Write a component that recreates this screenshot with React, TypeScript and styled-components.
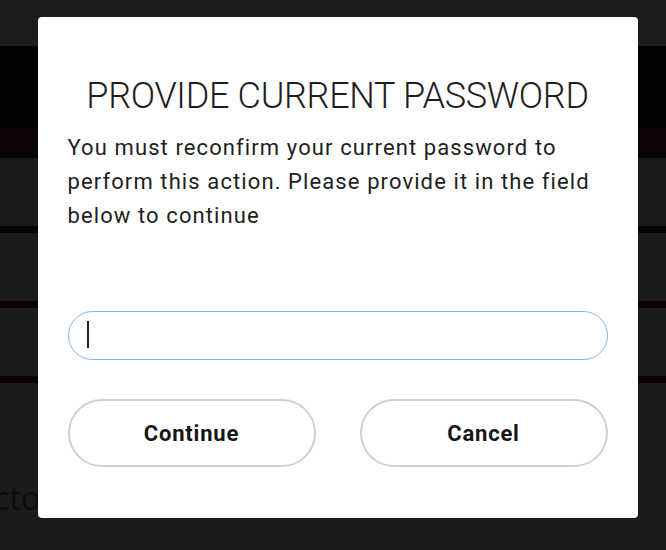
import React from 'react';
import styled, { createGlobalStyle } from 'styled-components';

const GlobalStyle = createGlobalStyle`
	html, body {
		margin: 0;
		padding: 0;
		background: #1b1b1b;
		overflow: hidden;
	}
	* {
		box-sizing: border-box;
	}
`

export default function App() {
	return (
		<>
			<GlobalStyle />
			<Page>
				<TopBar />
				<Hero />
				<Banner />
				<Row />
				<Row />
				<Row />
				<Row last />
				<Section>
					<SectionTitle>Two-Factor authentication</SectionTitle>
				</Section>
			</Page>
			<Overlay>
				<Modal>
					<ModalTitle>PROVIDE CURRENT PASSWORD</ModalTitle>
					<ModalText>
						You must reconfirm your current password to perform this action. Please provide it in the field below to continue
					</ModalText>
					<Field>
						<PasswordInput type="password" autoFocus />
						<Caret />
					</Field>
					<Actions>
						<ActionButton>Continue</ActionButton>
						<ActionButton>Cancel</ActionButton>
					</Actions>
				</Modal>
			</Overlay>
		</>
	)
}

const Page = styled.div`
	width: 100%;
	height: 550px;
	display: flex;
	flex-direction: column;
	background: #1b1b1b;
`
const TopBar = styled.header`
	height: 46px;
	background: #1c1c1c;
`
const Hero = styled.div`
	height: 82px;
	background: #030303;
`
const Banner = styled.div`
	height: 30px;
	background: #0b0305;
`
const Row = styled.div<{ last?: boolean }>`
	height: ${props => props.last ? '66px' : '75px'};
	background: #1a1a1a;
	border-bottom: ${props => props.last ? 'none' : '7px solid #0b0305'};
`
const Section = styled.div`
	padding-top: 27px;
	overflow: hidden;
`
const SectionTitle = styled.h2`
	margin: 0 0 0 -112px;
	font-family: 'Open Sans', sans-serif;
	font-weight: 400;
	font-size: 32px;
	color: #0e0e0e;
	white-space: nowrap;
`

const Overlay = styled.div`
	position: fixed;
	inset: 0;
	display: flex;
	justify-content: center;
	align-items: flex-start;
	padding-top: 17px;
`
const Modal = styled.div`
	width: 600px;
	height: 501px;
	margin-left: 9px;
	background: #fff;
	border-radius: 4px;
	padding: 58px 30px 0;
	display: flex;
	flex-direction: column;
	font-family: Roboto, 'Liberation Sans', sans-serif;
`
const ModalTitle = styled.h2`
	margin: 0;
	text-align: center;
	font-weight: 300;
	font-size: 36px;
	line-height: 42px;
	letter-spacing: -0.3px;
	color: #1e1e1e;
`
const ModalText = styled.p`
	margin: 14px 0 0;
	max-width: 530px;
	font-size: 22px;
	line-height: 34px;
	letter-spacing: 1.1px;
	color: #1e1e1e;
`
const Field = styled.div`
	position: relative;
	margin-top: 78px;
`
const PasswordInput = styled.input`
	display: block;
	height: 49px;
	width: 100%;
	border: 1px solid #7db7ea;
	border-radius: 25px;
	padding: 0 20px;
	font-size: 20px;
	outline: none;
	caret-color: transparent;
`
const Caret = styled.span`
	position: absolute;
	left: 19px;
	top: 10px;
	width: 2px;
	height: 27px;
	background: #222;
	pointer-events: none;
`
const Actions = styled.div`
	margin-top: 39px;
	display: flex;
	justify-content: space-between;
`
const ActionButton = styled.button`
	width: 248px;
	height: 68px;
	border: 2px solid #d0d0d0;
	border-radius: 34px;
	background: #fff;
	font-family: Roboto, 'Liberation Sans', sans-serif;
	font-weight: 700;
	font-size: 22px;
	letter-spacing: 0.8px;
	color: #161616;
	cursor: pointer;
`
